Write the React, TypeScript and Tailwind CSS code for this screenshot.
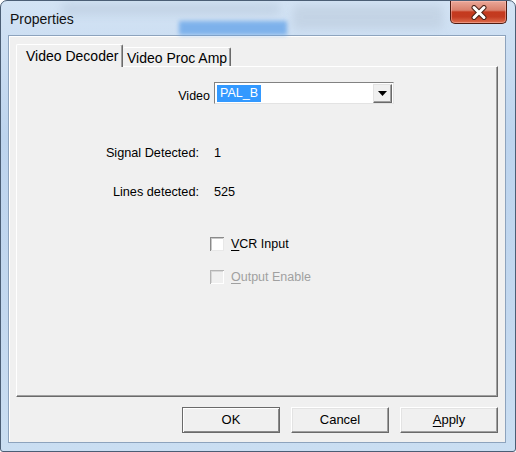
import React from 'react'

const font = "font-['Liberation_Sans',Arial,sans-serif]"

function CloseButton() {
  return (
    <div className="mr-[8px] flex h-[23px] w-[57px] items-center justify-center rounded-b-[5px] border border-t-0 border-[#4e1c12] bg-[linear-gradient(to_bottom,#eaa899_0%,#d9806c_42%,#c4391e_50%,#c33b21_72%,#de6e4e_100%)] shadow-[inset_0_0_0_1px_rgba(255,200,190,0.45)]">
      <svg width="18" height="15" viewBox="0 0 18 15">
        <path d="M4 2.5 L14 12.5 M14 2.5 L4 12.5" stroke="#4a2218" strokeWidth="5" strokeLinecap="round" />
        <path d="M4 2.5 L14 12.5 M14 2.5 L4 12.5" stroke="#ffffff" strokeWidth="3" strokeLinecap="round" />
      </svg>
    </div>
  )
}

function Checkbox({ label, accel, disabled }: { label: string; accel: string; disabled?: boolean }) {
  return (
    <div className="flex h-[16px] items-center">
      <div
        className={
          disabled
            ? 'ml-[193px] h-[14px] w-[14px] bg-[#f0f0f0] shadow-[inset_1px_1px_0_#b4b4b4,inset_-1px_-1px_0_#ffffff,inset_2px_2px_0_#d8d8d8]'
            : 'ml-[193px] h-[14px] w-[14px] bg-white shadow-[inset_1px_1px_0_#8a8a8a,inset_-1px_-1px_0_#e8e8e8,inset_2px_2px_0_#c8c8c8]'
        }
      />
      <span className={disabled ? 'ml-[7px] text-[12.5px] leading-[16px] text-[#a0a0a0]' : 'ml-[7px] text-[12.5px] leading-[16px] text-black'}>
        <span className="underline underline-offset-[2px]">{accel}</span>
        {label}
      </span>
    </div>
  )
}

function Button({ children, isDefault }: { children: React.ReactNode; isDefault?: boolean }) {
  return (
    <div
      className={
        isDefault
          ? 'flex h-[26px] w-[98px] items-center justify-center border border-[#6a6a6a] bg-[#f0f0f0] text-[13px] text-black shadow-[inset_1px_1px_0_#ffffff,inset_-1px_-1px_0_#8a8a8a]'
          : 'flex h-[26px] w-[98px] items-center justify-center border border-t-white border-l-white border-r-[#6a6a6a] border-b-[#6a6a6a] bg-[#f0f0f0] text-[13px] text-black shadow-[inset_-1px_-1px_0_#a0a0a0,inset_1px_1px_0_#e3e3e3]'
      }
    >
      {children}
    </div>
  )
}

export default function App() {
  return (
    <div className={`${font} flex h-[452px] w-[516px] flex-col overflow-hidden rounded-t-[7px] rounded-b-[3px] border border-[#4b5e75] bg-[linear-gradient(to_bottom,#d3e3f4_0%,#bdd4ee_30%,#c3d8ef_70%,#cadef2_100%)]`}>
      {/* title bar */}
      <div className="relative flex h-[34px] shrink-0 items-start justify-between">
        <div className="absolute left-[60px] top-[2px] h-[12px] w-[220px] rounded-full bg-[#aebfd3] opacity-40 blur-[4px]" />
        <div className="absolute left-[178px] top-[20px] h-[14px] w-[108px] bg-[#5b9ee8] opacity-70 blur-[2px]" />
        <div className="absolute left-[292px] top-[4px] h-[24px] w-[150px] rounded bg-[#b8c7d8] opacity-50 blur-[4px]" />
        <span className="relative pl-[9px] pt-[8px] text-[14px] leading-[20px] text-[#111]">Properties</span>
        <div className="relative">
          <CloseButton />
        </div>
      </div>

      {/* client area */}
      <div className="ml-[7px] flex h-[408px] w-[498px] flex-col border border-[#8da3bd] bg-[#f0f0f0] shadow-[inset_1px_1px_0_#ffffff]">
        {/* tabs */}
        <div className="ml-[7px] mt-[8px] flex items-end">
          <div className="relative z-10 flex h-[23px] w-[107px] items-start rounded-t-[2px] border-l border-t border-r border-l-white border-t-white border-r-[#6a6a6a] bg-[#f0f0f0] pl-[9px] pt-[2px] shadow-[inset_-1px_0_0_#a0a0a0]">
            <span className="text-[14px] leading-[18px] text-black">Video Decoder</span>
          </div>
          <div className="mb-[1px] flex h-[19px] w-[108px] items-start rounded-t-[2px] border-t border-r border-t-white border-r-[#6a6a6a] pl-[4px] pt-[1px] shadow-[inset_-1px_0_0_#a0a0a0]">
            <span className="text-[14px] leading-[18px] text-black">Video Proc Amp</span>
          </div>
        </div>

        {/* panel */}
        <div className="ml-[7px] -mt-[1px] flex h-[331px] w-[482px] flex-col border border-t-white border-l-white border-r-[#6a6a6a] border-b-[#6a6a6a] shadow-[inset_-1px_-1px_0_#a0a0a0]">
          <div className="mt-[15px] flex items-end">
            <span className="w-[193px] text-right text-[12.5px] leading-[16px] text-black">Video</span>
            <div className="ml-[4px] flex h-[22px] w-[180px] items-center border border-t-[#828282] border-l-[#828282] border-r-[#e3e3e3] border-b-[#e3e3e3] bg-white">
              <span className="ml-[2px] flex h-[17px] items-center bg-[#3399ff] px-[3px] text-[12.5px] text-white">PAL_B</span>
              <div className="ml-auto mr-[1px] flex h-[19px] w-[19px] items-center justify-center border border-t-[#e3e3e3] border-l-[#e3e3e3] border-r-[#6a6a6a] border-b-[#6a6a6a] bg-[#f0f0f0] shadow-[inset_-1px_-1px_0_#a0a0a0]">
                <svg width="9" height="5" viewBox="0 0 9 5">
                  <path d="M0 0 H9 L4.5 5 Z" fill="#000" />
                </svg>
              </div>
            </div>
          </div>

          <div className="mt-[41px] flex h-[16px] items-center">
            <span className="w-[182px] text-right text-[12.7px] leading-[16px] text-black">Signal Detected:</span>
            <span className="ml-[15px] text-[12.7px] leading-[16px] text-black">1</span>
          </div>

          <div className="mt-[23px] flex h-[16px] items-center">
            <span className="w-[182px] text-right text-[12.7px] leading-[16px] text-black">Lines detected:</span>
            <span className="ml-[15px] text-[12.7px] leading-[16px] text-black">525</span>
          </div>

          <div className="mt-[36px]">
            <Checkbox accel="V" label="CR Input" />
          </div>
          <div className="mt-[17px]">
            <Checkbox accel="O" label="utput Enable" disabled />
          </div>
        </div>

        {/* buttons */}
        <div className="mr-[7px] mt-[10px] flex justify-end gap-[11px]">
          <Button isDefault>OK</Button>
          <Button>Cancel</Button>
          <Button>
            <span>
              <span className="underline underline-offset-[2px]">A</span>pply
            </span>
          </Button>
        </div>
      </div>
    </div>
  )
}
